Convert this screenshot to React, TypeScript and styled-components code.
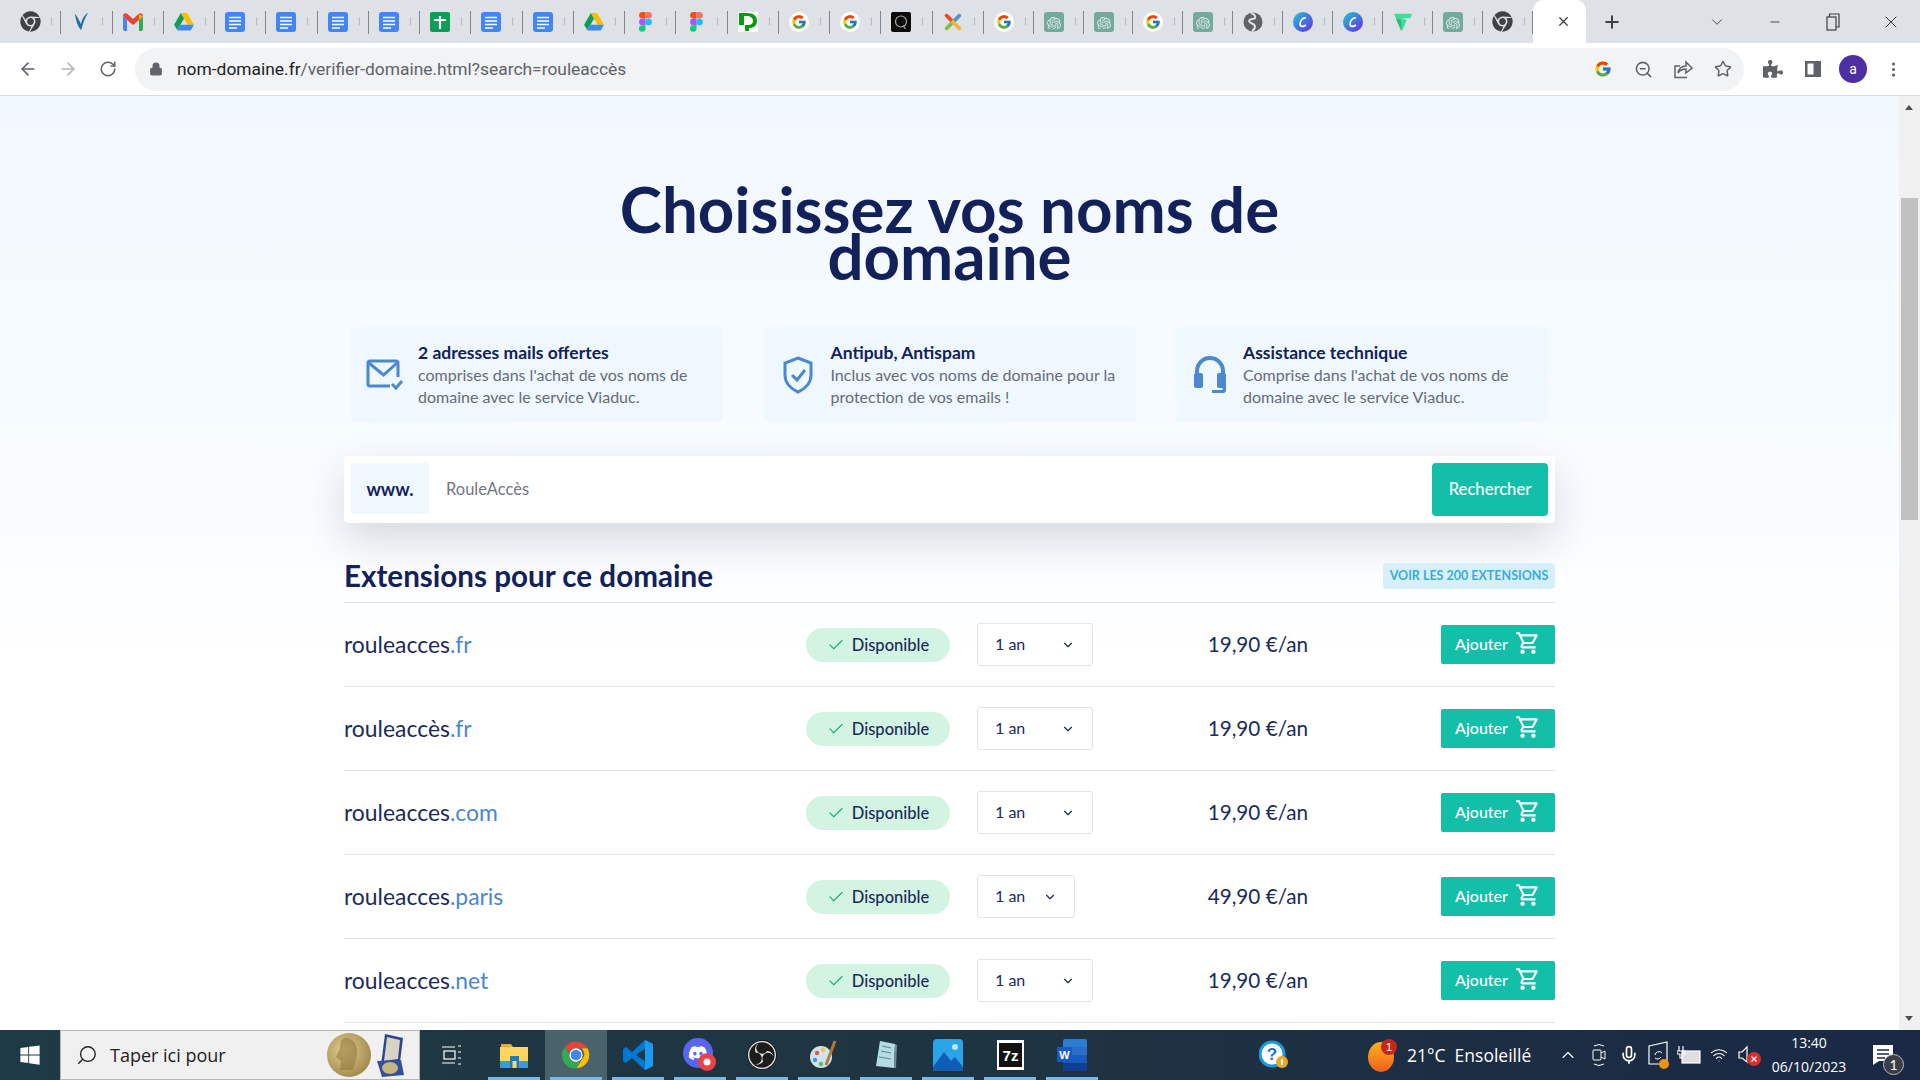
import React from "react";
import styled, {createGlobalStyle} from "styled-components";
import {ArrowLeft, ArrowRight, ChevronDown, ChevronUp, Check, Lock, Minus, Mic, MoreVertical, Plus, RotateCw, Search, Star, Wifi, X, ZoomOut} from "lucide-react";
import {FcGoogle} from "react-icons/fc";
import {FaChrome, FaDiscord, FaPuzzlePiece, FaWindows} from "react-icons/fa";
import {SiObsstudio, SiOpenai} from "react-icons/si";
import {MdOutlineShoppingCart} from "react-icons/md";

const GlobalStyle = createGlobalStyle`
  html, body {
    margin: 0;
    padding: 0;
    overflow: hidden;
  }
  * {
    box-sizing: border-box;
  }
`;

const Screen = styled.div`
  width: 1920px;
  height: 1080px;
  display: flex;
  flex-direction: column;
  overflow: hidden;
  font-family: Lato, "Noto Sans", sans-serif;
`;

const TabStrip = styled.div`
  height: 43px;
  flex-shrink: 0;
  background: #dee1e6;
  display: flex;
  padding-left: 10px;
`;

const Tab = styled.div<{$compact?: boolean}>`
  width: ${(props) => props.$compact ? "49.9px" : "51.25px"};
  height: 43px;
  position: relative;
  display: flex;
  align-items: center;
  padding-left: 8px;
  flex-shrink: 0;

  &::before {
    content: "";
    position: absolute;
    left: 41px;
    top: 17px;
    width: 1px;
    height: 8px;
    background: #b9bcc2;
  }
  &::after {
    content: "";
    position: absolute;
    right: 0;
    top: 11px;
    width: 1px;
    height: 23px;
    background: #80868b;
  }
`;

const TabIcon = styled.div`
  width: 24px;
  display: flex;
  align-items: center;
  justify-content: center;
`;

const ActiveTab = styled.div`
  width: 53px;
  height: 43px;
  background: #fff;
  border-radius: 10px 10px 0 0;
  display: flex;
  align-items: center;
  padding-left: 23px;
  color: #3c4043;
  flex-shrink: 0;
`;

const NewTab = styled.div`
  width: 52px;
  display: flex;
  align-items: center;
  justify-content: center;
  color: #3c4043;
`;

const WindowControls = styled.div`
  margin-left: auto;
  display: flex;
  align-items: center;
  color: #3c4043;
`;

const WindowButton = styled.div`
  width: 58px;
  height: 43px;
  display: flex;
  align-items: center;
  justify-content: center;
`;

const Toolbar = styled.div`
  height: 53px;
  flex-shrink: 0;
  background: #fff;
  border-bottom: 1px solid #dadce0;
  display: flex;
  align-items: center;
  position: relative;
  padding-left: 8px;
`;

const NavButton = styled.div<{$muted?: boolean}>`
  width: 40px;
  height: 40px;
  display: flex;
  align-items: center;
  justify-content: center;
  color: ${(props) => props.$muted ? "#b3b6ba" : "#5f6368"};
`;

const Omnibox = styled.div`
  width: 1609px;
  height: 43px;
  margin-left: 7px;
  border-radius: 22px;
  background: #f1f3f4;
  display: flex;
  align-items: center;
  padding: 0 9px 0 14px;
  color: #5f6368;
`;

const Url = styled.div`
  margin-left: 14px;
  font-family: Roboto, sans-serif;
  font-size: 17.4px;
  color: #5f6368;
  white-space: nowrap;

  b {
    font-weight: 400;
    color: #202124;
  }
`;

const OmniActions = styled.div`
  margin-left: auto;
  display: flex;
  align-items: center;
  gap: 16px;
`;

const OmniAction = styled.div`
  width: 24px;
  height: 24px;
  display: flex;
  align-items: center;
  justify-content: center;
`;

const ToolbarActions = styled.div`
  display: flex;
  align-items: center;
  margin-left: 9px;
  color: #5f6368;
`;

const ToolbarAction = styled.div`
  width: 40px;
  height: 40px;
  display: flex;
  align-items: center;
  justify-content: center;
`;

const Avatar = styled.div`
  width: 28px;
  height: 28px;
  border-radius: 50%;
  background: #4e2ea3;
  color: #fff;
  font-family: Roboto, sans-serif;
  font-size: 14px;
  display: flex;
  align-items: center;
  justify-content: center;
`;

const Viewport = styled.div`
  flex: 1;
  min-height: 0;
  display: flex;
`;

const Page = styled.main`
  flex: 1;
  min-width: 0;
  overflow: hidden;
  background: linear-gradient(180deg, #f2f8ff 0%, #f8fcff 42%, #ffffff 60%);
`;

const Container = styled.div`
  width: 1211px;
  margin: 0 auto;
`;

const Title = styled.h1`
  margin: 0;
  padding-top: 89px;
  text-align: center;
  font-size: 63.6px;
  line-height: 47px;
  font-weight: 700;
  color: #12215a;
`;

const Perks = styled.div`
  margin-top: 48px;
  padding: 0 7px;
  display: grid;
  grid-template-columns: repeat(3, 372px);
  justify-content: space-between;
`;

const Perk = styled.div`
  height: 95px;
  background: #eff7ff;
  border-radius: 4px;
  display: flex;
  align-items: center;
  padding: 0 14px 0 14px;
`;

const PerkIcon = styled.div`
  width: 40px;
  flex-shrink: 0;
  margin-right: 13px;
  display: flex;
  justify-content: center;
  color: #4a88d2;
`;

const PerkTitle = styled.div`
  font-size: 17.5px;
  line-height: 21px;
  margin-bottom: 1px;
  font-weight: 700;
  color: #12215a;
`;

const PerkText = styled.div`
  font-size: 16px;
  line-height: 22px;
  color: #666c78;
  white-space: nowrap;
`;

const SearchBar = styled.div`
  margin-top: 34px;
  height: 67px;
  background: #fff;
  border-radius: 4px;
  padding: 7px;
  display: flex;
  align-items: flex-start;
  box-shadow: 0 18px 40px rgba(30, 40, 60, 0.16);
`;

const Prefix = styled.div`
  width: 78px;
  height: 51px;
  background: #eff7ff;
  border-radius: 3px;
  display: flex;
  align-items: center;
  justify-content: center;
  font-size: 18px;
  font-weight: 700;
  color: #12215a;
`;

const Query = styled.div`
  flex: 1;
  height: 51px;
  padding-left: 17px;
  display: flex;
  align-items: center;
  font-size: 16.5px;
  color: #72767f;
`;

const SearchButton = styled.div`
  width: 116px;
  height: 53px;
  background: #14bfaa;
  border-radius: 4px;
  padding-bottom: 2px;
  color: #fff;
  font-size: 16.6px;
  font-weight: 500;
  display: flex;
  align-items: center;
  justify-content: center;
`;

const SectionHead = styled.div`
  margin-top: 40px;
  height: 26px;
  display: flex;
  align-items: center;
  justify-content: space-between;
`;

const SectionTitle = styled.h2`
  margin: 0 0 2px;
  font-size: 29.6px;
  font-weight: 700;
  color: #12215a;
`;

const AllLink = styled.div`
  width: 172px;
  height: 26px;
  padding-bottom: 1px;
  background: #d6eff8;
  border-radius: 4px;
  color: #36afd9;
  font-size: 12.5px;
  font-weight: 700;
  display: flex;
  align-items: center;
  justify-content: center;
  white-space: nowrap;
`;

const Results = styled.div`
  margin-top: 13px;
  border-top: 1px solid #e2e4ec;
`;

const Row = styled.div`
  height: 84px;
  border-bottom: 1px solid #e2e4ec;
  display: grid;
  grid-template-columns: 462px 171px 116px 215px 1fr;
  align-items: center;
`;

const DomainName = styled.div`
  padding-bottom: 2px;
  font-size: 22.9px;
  color: #1b2a5c;

  span {
    color: #4a86d0;
  }
`;

const Available = styled.div`
  width: 144px;
  height: 34px;
  background: #d3f4e3;
  border-radius: 17px;
  display: flex;
  align-items: center;
  justify-content: center;
  gap: 7px;
  color: #1b2a5c;
  font-size: 16.5px;
  font-weight: 500;

  svg {
    color: #22b573;
  }
`;

const DurationSelect = styled.div<{$narrow?: boolean}>`
  width: ${(props) => props.$narrow ? "98px" : "116px"};
  height: 43px;
  background: #fff;
  border: 1px solid #e2e4ec;
  border-radius: 3px;
  display: flex;
  align-items: center;
  justify-content: space-between;
  padding: 0 17px 2px 17px;
  font-size: 16px;
  color: #1b2a5c;

  svg {
    margin-top: 2px;
  }
`;

const Price = styled.div`
  padding-bottom: 2px;
  text-align: right;
  font-size: 20.7px;
  color: #1b2a5c;
`;

const AddButton = styled.div`
  justify-self: end;
  width: 114px;
  height: 39px;
  background: #14bfaa;
  border-radius: 2px;
  padding-bottom: 3px;
  color: #fff;
  font-size: 16px;
  font-weight: 500;
  display: flex;
  align-items: center;
  justify-content: center;
  gap: 7px;
`;

const Scrollbar = styled.div`
  width: 21px;
  flex-shrink: 0;
  background: #f0f0f0;
  position: relative;
`;

const ScrollThumb = styled.div`
  position: absolute;
  left: 2px;
  right: 2px;
  top: 102px;
  height: 322px;
  background: #c1c1c1;
`;

const ScrollArrow = styled.div<{$down?: boolean}>`
  position: absolute;
  left: 6px;
  width: 0;
  height: 0;
  border-left: 4.5px solid transparent;
  border-right: 4.5px solid transparent;
  ${(props) => props.$down
    ? "bottom: 9px; border-top: 5px solid #505050;"
    : "top: 9px; border-bottom: 5px solid #505050;"}
`;

const Taskbar = styled.footer`
  height: 50px;
  flex-shrink: 0;
  background: linear-gradient(90deg, #1e3a44 0%, #1f3441 50%, #1a2845 100%);
  display: flex;
  align-items: center;
  color: #fff;
`;

const StartButton = styled.div`
  width: 60px;
  height: 50px;
  display: flex;
  align-items: center;
  justify-content: center;
`;

const SearchBox = styled.div`
  width: 360px;
  height: 50px;
  background: #f0f0f0;
  border: 1px solid #b5b5b5;
  display: flex;
  align-items: center;
  padding-left: 15px;
  color: #222;
  font-family: "Open Sans", sans-serif;
  font-size: 18px;
  position: relative;

  span {
    margin-left: 12px;
  }
`;

const SearchArt = styled.div`
  position: absolute;
  right: 14px;
  top: 1px;
  line-height: 0;
`;

const TaskView = styled.div`
  width: 63px;
  display: flex;
  justify-content: center;
`;

const TaskItem = styled.div<{$open?: boolean; $active?: boolean}>`
  width: 62px;
  height: 50px;
  position: relative;
  display: flex;
  align-items: center;
  justify-content: center;
  background: ${(props) => props.$active ? "#4a626c" : "transparent"};

  &::after {
    content: "";
    display: ${(props) => props.$open ? "block" : "none"};
    position: absolute;
    left: 5px;
    right: 5px;
    bottom: 0;
    height: 3px;
    background: #76b9ed;
  }
`;

const TraySpacer = styled.div<{$w: number}>`
  width: ${(props) => props.$w}px;
  flex-shrink: 0;
`;

const TrayIcon = styled.div<{$w: number}>`
  width: ${(props) => props.$w}px;
  height: 50px;
  display: flex;
  align-items: center;
  justify-content: center;
  flex-shrink: 0;
  position: relative;
`;

const Weather = styled.div`
  font-family: "Open Sans", sans-serif;
  font-size: 17.5px;
  white-space: nowrap;
  width: 149px;
  padding-left: 4px;
`;

const Clock = styled.div`
  width: 90px;
  font-family: "Open Sans", sans-serif;
  font-size: 14px;
  line-height: 24px;
  text-align: center;
  white-space: nowrap;
`;

const CountBadge = styled.div`
  position: absolute;
  right: 8px;
  bottom: 5px;
  width: 21px;
  height: 21px;
  border-radius: 50%;
  background: #3b3f45;
  border: 1px solid #b8bcc2;
  display: flex;
  align-items: center;
  justify-content: center;
  font-size: 14px;
`;

// --- drawn icons ---

const ChromeDark = () => <FaChrome size={21} color="#3f4145"/>;

const Docs = () => (
    <svg width="20" height="20" viewBox="0 0 20 20">
        <rect width="20" height="20" rx="3" fill="#4285f4"/>
        <path d="M4 5.500h12M4 9h12M4 12.500h12M4 16h8" stroke="#fff" strokeWidth="1.700"/>
    </svg>
);

const Sheets = () => (
    <svg width="20" height="20" viewBox="0 0 20 20">
        <rect width="20" height="20" rx="2" fill="#0f9d58"/>
        <path d="M4 8h12M10 4v13" stroke="#fff" strokeWidth="2.200"/>
    </svg>
);

const Viaduc = () => (
    <svg width="18" height="21" viewBox="0 0 20 24">
        <path d="M3 3c1 7 3 14 7 19 2-6 4-14 8-20-4 2-7 8-8 13C8 11 6 6 3 3z" fill="#1d6f9f"/>
    </svg>
);

const Gmail = () => (
    <svg width="20" height="18" viewBox="0 0 20 18">
        <path d="M0 3v13a2 2 0 0 0 2 2h2V7z" fill="#4285f4"/>
        <path d="M20 3v13a2 2 0 0 1-2 2h-2V7z" fill="#34a853"/>
        <path d="M0 3c0-3 3-3.500 4.500-2L10 6l5.500-5C17-.5 20 0 20 3l-4 4-6 5-6-5z" fill="#ea4335"/>
        <path d="M16 1.500l4 1.500-4 4z" fill="#fbbc04"/>
    </svg>
);

const Drive = () => (
    <svg width="20" height="18" viewBox="0 0 22 20">
        <path d="M7.500 0h7L22 13h-7z" fill="#fbbc04"/>
        <path d="M7.500 0L0 13l3.500 6L11 6.500z" fill="#0f9d58"/>
        <path d="M3.500 19.500L7 13h15l-3.500 6.500z" fill="#4285f4"/>
    </svg>
);

const Figma = () => (
    <svg width="13" height="20" viewBox="0 0 16 26">
        <path d="M8 0H4a4.300 4.300 0 0 0 0 8.600h4z" fill="#f24e1e"/>
        <path d="M8 0h4a4.300 4.300 0 0 1 0 8.600H8z" fill="#ff7262"/>
        <path d="M8 8.600H4a4.300 4.300 0 0 0 0 8.600h4z" fill="#a259ff"/>
        <circle cx="12" cy="12.900" r="4.200" fill="#1abcfe"/>
        <path d="M8 17.200H4A4.300 4.300 0 1 0 8 21.500z" fill="#0acf83"/>
    </svg>
);

const DLogo = () => (
    <svg width="20" height="20" viewBox="0 0 20 20">
        <rect width="20" height="20" fill="#fff"/>
        <path d="M1 1h8c7 0 10 3.500 10 8s-3 7-8 7v3H7v-6h3c3 0 5-1.500 5-4s-2-5-6-5H6v9H1z" fill="#0a9a12"/>
    </svg>
);

const GoogleTab = () => (
    <svg width="20" height="20" viewBox="0 0 20 20">
        <circle cx="10" cy="10" r="10" fill="#fff"/>
        <foreignObject x="2" y="2" width="16" height="16"><FcGoogle size={16}/></foreignObject>
    </svg>
);

const QLogo = () => (
    <svg width="20" height="20" viewBox="0 0 20 20">
        <rect width="20" height="20" rx="2" fill="#0a0a0a"/>
        <circle cx="10" cy="9.500" r="5.500" fill="none" stroke="#aaa" strokeWidth="1.200"/>
        <path d="M12 13.500l2.500 3.500" stroke="#aaa" strokeWidth="1.200"/>
    </svg>
);

const Joomla = () => (
    <svg width="20" height="20" viewBox="0 0 22 22" fill="none" strokeWidth="4" strokeLinecap="round">
        <path d="M4 4l7 7" stroke="#f44321"/>
        <path d="M18 4l-7 7" stroke="#5091cd"/>
        <path d="M4 18l7-7" stroke="#7ac143"/>
        <path d="M18 18l-7-7" stroke="#fbb03b"/>
    </svg>
);

const Gpt = () => (
    <svg width="20" height="20" viewBox="0 0 20 20">
        <rect width="20" height="20" rx="3" fill="#74aa9c"/>
        <foreignObject x="3" y="3" width="14" height="14"><SiOpenai size={14} color="#d8ebe5"/></foreignObject>
    </svg>
);

const GlobeDark = () => (
    <svg width="20" height="20" viewBox="0 0 20 20">
        <circle cx="10" cy="10" r="9.500" fill="#5f6368"/>
        <path d="M8 1c3 1 5 3 4 5-2 2-5 0-6 3 1 3 5 2 6 5 0 2-1 4-3 5" fill="none" stroke="#dee1e6" strokeWidth="2"/>
    </svg>
);

const Canva = () => (
    <svg width="20" height="20" viewBox="0 0 20 20">
        <defs>
            <linearGradient id="canva" x1="0" y1="0" x2="1" y2="1">
                <stop offset="0" stopColor="#1fc6d8"/>
                <stop offset="1" stopColor="#6a2be0"/>
            </linearGradient>
        </defs>
        <circle cx="10" cy="10" r="10" fill="url(#canva)"/>
        <path d="M13 6c-3-1-6 3-6 6 0 3 3 3 6 1" fill="none" stroke="#fff" strokeWidth="1.600"/>
    </svg>
);

const Vercelish = () => (
    <svg width="20" height="20" viewBox="0 0 20 22">
        <path d="M0 2h20l-2 5H9l5 2-5 12z" fill="#3ddc97"/>
        <path d="M2 7l6 14V9z" fill="#2bb67d"/>
    </svg>
);

const MailCheck = () => (
    <svg width="38" height="34" viewBox="0 0 38 34" fill="none" stroke="currentColor">
        <path d="M2 12V5a2 2 0 0 1 2-2h26a2 2 0 0 1 2 2v14M2 12v14a2 2 0 0 0 2 2h20" strokeWidth="3"/>
        <path d="M3 5l14.500 12L31 5" strokeWidth="3"/>
        <path d="M26 26l4 4 6-7" strokeWidth="3"/>
    </svg>
);

const ShieldCheck = () => (
    <svg width="32" height="38" viewBox="0 0 32 38" fill="none" stroke="currentColor" strokeWidth="3">
        <path d="M16 2l13 5v12c0 8-6 14-13 17C9 33 3 27 3 19V7z"/>
        <path d="M10 19l5 5 8-10"/>
    </svg>
);

const Headset = () => (
    <svg width="34" height="38" viewBox="0 0 34 38" fill="currentColor">
        <path d="M2 20v-5a15 15 0 0 1 30 0v5h-4v-5a11 11 0 0 0-22 0v5z"/>
        <rect x="1" y="17" width="9" height="15" rx="2"/>
        <rect x="24" y="17" width="9" height="15" rx="2"/>
        <path d="M33 28v6a3 3 0 0 1-3 3H19v-3h10.500V28z"/>
    </svg>
);

const SharePage = () => (
    <svg width="20" height="20" viewBox="0 0 20 20" fill="none" stroke="#5f6368" strokeWidth="1.500">
        <path d="M14 18.500H2V7h5"/>
        <path d="M5 14c1-5 4-7 8-7V3l6 6-6 5v-4c-3 0-6 1-8 4z"/>
    </svg>
);

const SidePanel = () => (
    <svg width="18" height="18" viewBox="0 0 18 18">
        <path d="M1 1h16v16H1zM3.500 3.500v11h6v-11z" fill="#5f6368" fillRule="evenodd"/>
        <rect x="11" y="2" width="5" height="14" fill="#5f6368"/>
    </svg>
);

const RestoreIcon = () => (
    <svg width="14" height="18" viewBox="0 0 14 18" fill="none" stroke="#3c4043" strokeWidth="1.200">
        <rect x="1" y="4" width="9" height="13"/>
        <path d="M3.500 4V1H13v13h-3"/>
    </svg>
);

const TaskViewIcon = () => (
    <svg width="20" height="22" viewBox="0 0 20 22" fill="none" stroke="#fff" strokeWidth="1.200">
        <rect x="2" y="7" width="11" height="8"/>
        <path d="M0 3h13M0 19h13M16 2h3M16 8h3M16 14h3M16 20h3"/>
    </svg>
);

const Explorer = () => (
    <svg width="28" height="28" viewBox="0 0 28 28">
        <path d="M1 3h10l2 3H1z" fill="#e8a933"/>
        <rect x="0" y="6" width="28" height="21" fill="#ffd65c"/>
        <rect x="0" y="20" width="28" height="7" fill="#3a9bd8"/>
        <rect x="10" y="15" width="9" height="12" fill="#2978b5"/>
        <rect x="12.500" y="20" width="4" height="7" fill="#ffd65c"/>
    </svg>
);

const ChromeColor = () => (
    <svg width="32" height="32" viewBox="0 0 48 48">
        <path d="M24 4a20 20 0 0 1 17.300 10H24a10 10 0 0 0-9.500 7L7.500 11.500A20 20 0 0 1 24 4z" fill="#ea4335"/>
        <path d="M41.300 14A20 20 0 0 1 25 44l8-14a10 10 0 0 0-1-16z" fill="#fbbc04"/>
        <path d="M7.500 11.500l9 15.500a10 10 0 0 0 13 6.500L25 44A20 20 0 0 1 7.500 11.500z" fill="#34a853"/>
        <circle cx="24" cy="24" r="9" fill="#4285f4" stroke="#fff" strokeWidth="2"/>
    </svg>
);

const VsCode = () => (
    <svg width="32" height="32" viewBox="0 0 32 32">
        <path d="M23 1l8 4v22l-8 4-13-12-6 5-3-2v-12l3-2 6 5z" fill="#0078d4"/>
        <path d="M23 1l8 4v22l-8 4z" fill="#1a9bf0"/>
        <path d="M23 9.500L14 16l9 6.500z" fill="#1e3a44"/>
    </svg>
);

const Discord = () => (
    <svg width="34" height="34" viewBox="0 0 34 34">
        <circle cx="15" cy="15" r="15" fill="#5865f2"/>
        <foreignObject x="5" y="5" width="20" height="20"><FaDiscord size={20} color="#fff"/></foreignObject>
        <circle cx="24" cy="24" r="9" fill="#ed4245"/>
        <circle cx="24" cy="24" r="3.500" fill="#fff"/>
    </svg>
);

const Obs = () => (
    <svg width="30" height="30" viewBox="0 0 30 30">
        <circle cx="15" cy="15" r="15" fill="#1c1c1c"/>
        <foreignObject x="1" y="1" width="28" height="28"><SiObsstudio size={28} color="#e8e8e8"/></foreignObject>
    </svg>
);

const Palette = () => (
    <svg width="30" height="32" viewBox="0 0 30 32">
        <ellipse cx="12" cy="18" rx="11" ry="11" fill="#cfe3ee"/>
        <circle cx="8" cy="14" r="2.200" fill="#e2574c"/>
        <circle cx="14" cy="11" r="2.200" fill="#f5c542"/>
        <circle cx="6" cy="21" r="2.200" fill="#3a9bd8"/>
        <circle cx="12" cy="25" r="2.200" fill="#5bb85b"/>
        <path d="M26 2L17 26" stroke="#b5763a" strokeWidth="3"/>
    </svg>
);

const Notepad = () => (
    <svg width="26" height="30" viewBox="0 0 26 30">
        <path d="M7 1l15 3-1 24-18-2z" fill="#b5dbe3"/>
        <path d="M9 6l9 2M8 11l10 2M6 17l12 2" stroke="#5b8c99" strokeWidth="1.200"/>
        <path d="M21 28l1-24 2 1-1 23z" fill="#6f8f98"/>
    </svg>
);

const Photos = () => (
    <svg width="30" height="32" viewBox="0 0 30 32">
        <path d="M4 0h22a4 4 0 0 1 4 4v28H0V4a4 4 0 0 1 4-4z" fill="#2aa4e8"/>
        <path d="M0 28l11-15 7 9 4-4 8 10v4H0z" fill="#0f5db5"/>
        <circle cx="22" cy="8" r="3" fill="#bfe6fb"/>
    </svg>
);

const SevenZip = () => (
    <svg width="27" height="30" viewBox="0 0 27 30">
        <rect width="27" height="30" fill="#fff"/>
        <rect x="2" y="3" width="23" height="24" fill="#111"/>
        <text x="13.500" y="21" textAnchor="middle" fontFamily="'Liberation Sans', sans-serif" fontWeight="700" fontSize="15" fill="#fff">7z</text>
    </svg>
);

const Word = () => (
    <svg width="30" height="32" viewBox="0 0 30 32">
        <rect x="6" y="0" width="24" height="32" rx="2" fill="#2b7cd3"/>
        <rect x="6" y="8" width="24" height="8" fill="#2b6fc4"/>
        <rect x="6" y="16" width="24" height="8" fill="#185abd"/>
        <rect x="6" y="24" width="24" height="8" fill="#103f91"/>
        <rect x="0" y="8" width="15" height="15" rx="1" fill="#185abd"/>
        <text x="7.500" y="20" textAnchor="middle" fontFamily="'Liberation Sans', sans-serif" fontWeight="700" fontSize="11" fill="#fff">W</text>
    </svg>
);

const Help = () => (
    <svg width="30" height="30" viewBox="0 0 30 30">
        <circle cx="13" cy="14" r="12" fill="#fff" stroke="#1a9bd8" strokeWidth="3"/>
        <text x="13" y="20" textAnchor="middle" fontFamily="'Liberation Sans', sans-serif" fontWeight="700" fontSize="17" fill="#1a78c8">?</text>
        <circle cx="23" cy="22" r="6" fill="#f2a81d"/>
        <rect x="22" y="19" width="2" height="6" fill="#fff"/>
    </svg>
);

const Sun = () => (
    <svg width="30" height="34" viewBox="0 0 30 34">
        <defs>
            <linearGradient id="sun" x1="0" y1="0" x2="0" y2="1">
                <stop offset="0" stopColor="#ffb21a"/>
                <stop offset="1" stopColor="#ef5e1e"/>
            </linearGradient>
        </defs>
        <ellipse cx="13" cy="19" rx="13" ry="15" fill="url(#sun)"/>
        <circle cx="21" cy="9" r="8" fill="#c4281c"/>
        <text x="21" y="13" textAnchor="middle" fontFamily="'Liberation Sans', sans-serif" fontSize="11" fill="#fff">1</text>
    </svg>
);

const Meet = () => (
    <svg width="16" height="26" viewBox="0 0 16 26" fill="none" stroke="#fff" strokeWidth="1">
        <path d="M3 4q5-3 10 0M3 22q5 3 10 0"/>
        <rect x="2" y="8" width="8" height="10" rx="1"/>
        <path d="M10 11l4-2v8l-4-2"/>
    </svg>
);

const DocSync = () => (
    <svg width="22" height="30" viewBox="0 0 22 30">
        <path d="M1 6l18-4v22H1z" fill="none" stroke="#fff" strokeWidth="1.200"/>
        <path d="M7 15a4 4 0 0 1 7-2M13 17a4 4 0 0 1-6 1" stroke="#fff" fill="none"/>
        <circle cx="16" cy="24" r="5" fill="#f29111"/>
    </svg>
);

const Battery = () => (
    <svg width="24" height="20" viewBox="0 0 24 20" fill="none" stroke="#fff" strokeWidth="1.200">
        <rect x="5" y="6" width="18" height="12" fill="#fff" fillOpacity=".85"/>
        <path d="M2 1v5M6 1v5M0 6h8v3H5v4H3V9H0z"/>
    </svg>
);

const Speaker = () => (
    <svg width="24" height="24" viewBox="0 0 24 24">
        <path d="M2 9h3l5-5v15l-5-4H2z" fill="none" stroke="#fff" strokeWidth="1.200"/>
        <circle cx="17" cy="16" r="7" fill="#d9302c"/>
        <path d="M14.500 13.500l5 5m0-5l-5 5" stroke="#fff" strokeWidth="1.200"/>
    </svg>
);

const Notification = () => (
    <svg width="20" height="20" viewBox="0 0 20 20">
        <path d="M0 0h20v16H6l-6 4z" fill="#fff"/>
        <path d="M4 5h12M4 9h12M4 13h8" stroke="#1a2845" strokeWidth="1.300"/>
    </svg>
);

const NobelArt = () => (
    <svg width="78" height="46" viewBox="0 0 78 46">
        <defs>
            <radialGradient id="gold" cx=".4" cy=".4" r=".7">
                <stop offset="0" stopColor="#e4cf8f"/>
                <stop offset="1" stopColor="#9a8345"/>
            </radialGradient>
        </defs>
        <ellipse cx="22" cy="23" rx="22" ry="22" fill="url(#gold)"/>
        <path d="M19 6c8 0 12 8 11 16l-1 6-3 10H13l1-9-5-4 4-9c0-6 2-10 6-10z" fill="#8d7639" opacity=".55"/>
        <path d="M58 2l18 4-3 24-19 3z" fill="#2b458f"/>
        <path d="M60 5l13 3-2 19-14 2z" fill="#d8d3c3"/>
        <path d="M50 29l24-1 3 15-22 2z" fill="#32509e"/>
        <ellipse cx="63" cy="36" rx="8" ry="6" fill="#c7b57e"/>
    </svg>
);

const TAB_ICONS = [
    ChromeDark, Viaduc, Gmail, Drive, Docs, Docs, Docs, Docs, Sheets, Docs, Docs, Drive, Figma, Figma, DLogo,
    GoogleTab, GoogleTab, QLogo, Joomla, GoogleTab, Gpt, Gpt, GoogleTab, Gpt, GlobeDark, Canva, Canva, Vercelish, Gpt, ChromeDark,
];

const RESULTS = [
    {name: "rouleacces", ext: ".fr", price: "19,90 €/an"},
    {name: "rouleaccès", ext: ".fr", price: "19,90 €/an"},
    {name: "rouleacces", ext: ".com", price: "19,90 €/an"},
    {name: "rouleacces", ext: ".paris", price: "49,90 €/an", narrow: true},
    {name: "rouleacces", ext: ".net", price: "19,90 €/an"},
];

const TASK_APPS = [
    {Icon: Explorer},
    {Icon: ChromeColor, active: true},
    {Icon: VsCode},
    {Icon: Discord},
    {Icon: Obs},
    {Icon: Palette},
    {Icon: Notepad},
    {Icon: Photos},
    {Icon: SevenZip},
    {Icon: Word},
];

const App = () => {
    return (
        <Screen>
            <GlobalStyle/>
            <TabStrip>
                {TAB_ICONS.map((Icon, index) => (
                    <Tab key={index} $compact={index >= 19}><TabIcon><Icon/></TabIcon></Tab>
                ))}
                <ActiveTab><X size={15} strokeWidth={2}/></ActiveTab>
                <NewTab><Plus size={20} strokeWidth={2.4}/></NewTab>
                <WindowControls>
                    <WindowButton><ChevronDown size={18} strokeWidth={1.2}/></WindowButton>
                    <WindowButton><Minus size={14} strokeWidth={1.6}/></WindowButton>
                    <WindowButton><RestoreIcon/></WindowButton>
                    <WindowButton><X size={20} strokeWidth={1.2}/></WindowButton>
                </WindowControls>
            </TabStrip>
            <Toolbar>
                <NavButton><ArrowLeft size={20}/></NavButton>
                <NavButton $muted><ArrowRight size={20}/></NavButton>
                <NavButton><RotateCw size={18}/></NavButton>
                <Omnibox>
                    <Lock size={14} fill="#5f6368"/>
                    <Url><b>nom-domaine.fr</b>/verifier-domaine.html?search=rouleaccès</Url>
                    <OmniActions>
                        <OmniAction><FcGoogle size={18}/></OmniAction>
                        <OmniAction><ZoomOut size={19}/></OmniAction>
                        <OmniAction><SharePage/></OmniAction>
                        <OmniAction><Star size={18}/></OmniAction>
                    </OmniActions>
                </Omnibox>
                <ToolbarActions>
                    <ToolbarAction><FaPuzzlePiece size={20}/></ToolbarAction>
                    <ToolbarAction><SidePanel/></ToolbarAction>
                    <ToolbarAction><Avatar>a</Avatar></ToolbarAction>
                    <ToolbarAction><MoreVertical size={19}/></ToolbarAction>
                </ToolbarActions>
            </Toolbar>
            <Viewport>
                <Page>
                    <Container>
                        <Title>Choisissez vos noms de<br/>domaine</Title>
                        <Perks>
                            <Perk>
                                <PerkIcon><MailCheck/></PerkIcon>
                                <div>
                                    <PerkTitle>2 adresses mails offertes</PerkTitle>
                                    <PerkText>comprises dans l'achat de vos noms de<br/>domaine avec le service Viaduc.</PerkText>
                                </div>
                            </Perk>
                            <Perk>
                                <PerkIcon><ShieldCheck/></PerkIcon>
                                <div>
                                    <PerkTitle>Antipub, Antispam</PerkTitle>
                                    <PerkText>Inclus avec vos noms de domaine pour la<br/>protection de vos emails !</PerkText>
                                </div>
                            </Perk>
                            <Perk>
                                <PerkIcon><Headset/></PerkIcon>
                                <div>
                                    <PerkTitle>Assistance technique</PerkTitle>
                                    <PerkText>Comprise dans l'achat de vos noms de<br/>domaine avec le service Viaduc.</PerkText>
                                </div>
                            </Perk>
                        </Perks>
                        <SearchBar>
                            <Prefix>www.</Prefix>
                            <Query>RouleAccès</Query>
                            <SearchButton>Rechercher</SearchButton>
                        </SearchBar>
                        <SectionHead>
                            <SectionTitle>Extensions pour ce domaine</SectionTitle>
                            <AllLink>VOIR LES 200 EXTENSIONS</AllLink>
                        </SectionHead>
                        <Results>
                            {RESULTS.map((item, index) => (
                                <Row key={index}>
                                    <DomainName>{item.name}<span>{item.ext}</span></DomainName>
                                    <Available><Check size={18} strokeWidth={1.6}/>Disponible</Available>
                                    <DurationSelect $narrow={item.narrow}>1 an<ChevronDown size={14}/></DurationSelect>
                                    <Price>{item.price}</Price>
                                    <AddButton>Ajouter<MdOutlineShoppingCart size={26}/></AddButton>
                                </Row>
                            ))}
                        </Results>
                    </Container>
                </Page>
                <Scrollbar>
                    <ScrollArrow/>
                    <ScrollThumb/>
                    <ScrollArrow $down/>
                </Scrollbar>
            </Viewport>
            <Taskbar>
                <StartButton><FaWindows size={22}/></StartButton>
                <SearchBox>
                    <Search size={22} strokeWidth={1.5} transform="scale(-1 1)"/>
                    <span>Taper ici pour</span>
                    <SearchArt><NobelArt/></SearchArt>
                </SearchBox>
                <TaskView><TaskViewIcon/></TaskView>
                {TASK_APPS.map(({Icon, active}, index) => (
                    <TaskItem key={index} $open $active={active}><Icon/></TaskItem>
                ))}
                <TraySpacer $w={140}/>
                <TrayIcon $w={62}><Help/></TrayIcon>
                <TraySpacer $w={58}/>
                <TrayIcon $w={40}><Sun/></TrayIcon>
                <Weather>21°C&nbsp;&nbsp;Ensoleillé</Weather>
                <TrayIcon $w={32}><ChevronUp size={20} strokeWidth={1.3}/></TrayIcon>
                <TrayIcon $w={30}><Meet/></TrayIcon>
                <TrayIcon $w={30}><Mic size={20}/></TrayIcon>
                <TrayIcon $w={30}><DocSync/></TrayIcon>
                <TrayIcon $w={30}><Battery/></TrayIcon>
                <TrayIcon $w={30}><Wifi size={18} strokeWidth={1.4}/></TrayIcon>
                <TrayIcon $w={30}><Speaker/></TrayIcon>
                <Clock>13:40<br/>06/10/2023</Clock>
                <TrayIcon $w={58}><Notification/><CountBadge>1</CountBadge></TrayIcon>
            </Taskbar>
        </Screen>
    );
};

export default App;
